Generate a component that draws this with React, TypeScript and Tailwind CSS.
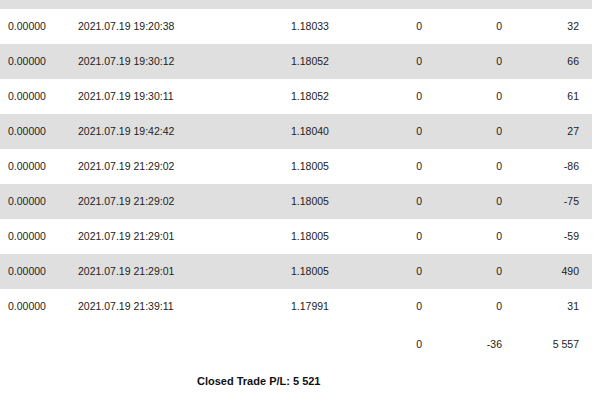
const rows = [
  ["0.00000", "2021.07.19 19:20:38", "1.18033", "0", "0", "32"],
  ["0.00000", "2021.07.19 19:30:12", "1.18052", "0", "0", "66"],
  ["0.00000", "2021.07.19 19:30:11", "1.18052", "0", "0", "61"],
  ["0.00000", "2021.07.19 19:42:42", "1.18040", "0", "0", "27"],
  ["0.00000", "2021.07.19 21:29:02", "1.18005", "0", "0", "-86"],
  ["0.00000", "2021.07.19 21:29:02", "1.18005", "0", "0", "-75"],
  ["0.00000", "2021.07.19 21:29:01", "1.18005", "0", "0", "-59"],
  ["0.00000", "2021.07.19 21:29:01", "1.18005", "0", "0", "490"],
  ["0.00000", "2021.07.19 21:39:11", "1.17991", "0", "0", "31"],
];

function Row({ cells, shaded }: { cells: string[]; shaded: boolean }) {
  return (
    <div
      className={`grid grid-cols-[78px_213px_90px_41px_80px_77px] h-[35.1px] items-center pt-[1px] ${
        shaded ? "bg-[#dfdfdf]" : "bg-white"
      }`}
    >
      <div className="pl-[8px]">{cells[0]}</div>
      <div>{cells[1]}</div>
      <div>{cells[2]}</div>
      <div className="text-right">{cells[3]}</div>
      <div className="text-right">{cells[4]}</div>
      <div className="text-right">{cells[5]}</div>
    </div>
  );
}

export default function App() {
  return (
    <div className="w-[600px] h-[407px] bg-white overflow-hidden font-['Liberation_Sans',Arial,sans-serif] text-[10.5px] text-[#222]">
      <div className="w-[592px]">
        <div className="h-[8.5px] bg-[#dfdfdf]" />
        {rows.map((r, i) => (
          <Row key={i} cells={r} shaded={i % 2 === 1} />
        ))}
        <div className="grid grid-cols-[78px_213px_90px_41px_80px_77px] h-[35px] items-center mt-[3px]">
          <div />
          <div />
          <div />
          <div className="text-right">0</div>
          <div className="text-right">-36</div>
          <div className="text-right">5 557</div>
        </div>
        <div className="pl-[197px] pt-[11px] font-bold text-[11px] text-[#111]">Closed Trade P/L: 5 521</div>
      </div>
    </div>
  );
}
